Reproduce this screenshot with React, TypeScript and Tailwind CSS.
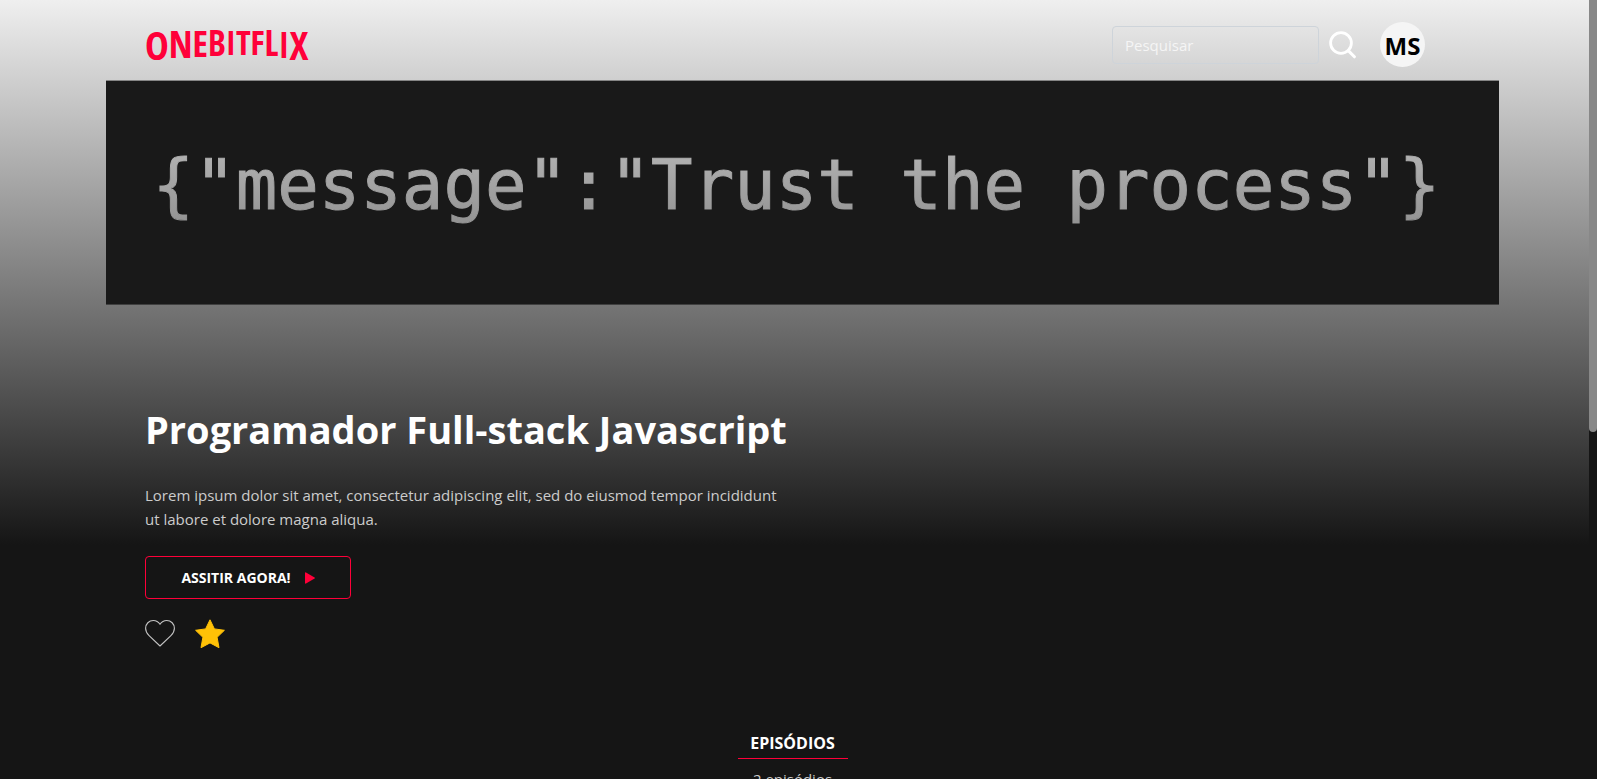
const logoLetters = [
  { char: "O", size: 40, dy: 36 },
  { char: "N", size: 38, dy: -2 },
  { char: "E", size: 36, dy: -1 },
  { char: "B", size: 35, dy: -1 },
  { char: "I", size: 34, dy: -1 },
  { char: "T", size: 34, dy: 0 },
  { char: "F", size: 34, dy: 0 },
  { char: "L", size: 35, dy: 1 },
  { char: "I", size: 36, dy: 2 },
  { char: "X", size: 40, dy: 2 },
];

function Logo() {
  return (
    <svg viewBox="0 0 164 40" className="h-10 w-[164px] overflow-visible" role="img" aria-label="ONEBITFLIX">
      <text x="0" y="0" fill="#ff0039" fontWeight="700" fontFamily="'Liberation Sans Narrow', 'Open Sans Condensed', 'DejaVu Sans Condensed', sans-serif">
        {logoLetters.map((letter, index) => (
          <tspan key={index} fontSize={letter.size} dy={letter.dy}>
            {letter.char}
          </tspan>
        ))}
      </text>
    </svg>
  );
}

function Header() {
  return (
    <header className="flex h-20 items-center justify-between pr-[164px] pl-[145px] pt-2">
      <a href="#">
        <Logo />
      </a>
      <div className="flex items-center">
        <form className="flex items-center gap-2.5 pt-0.5" onSubmit={(event) => event.preventDefault()}>
          <input
            type="search"
            aria-label="Pesquisar"
            placeholder="Pesquisar"
            className="h-[38px] w-[207px] rounded border border-[#ced4da] bg-transparent px-3 text-[15px] text-white placeholder:text-[#f5f5f5]"
          />
          <button type="submit" aria-label="Buscar">
            <svg viewBox="0 0 27 28" className="h-7 w-[27px]" fill="none" stroke="#fff" strokeLinecap="round">
              <circle cx="12" cy="12" r="10.4" strokeWidth="2.8" />
              <path d="M19.300 19.600 25.400 25.800" strokeWidth="3" />
            </svg>
          </button>
        </form>
        <button type="button" className="ml-6 flex size-[45px] items-center justify-center rounded-full bg-[#f5f5f5] pt-1 text-2xl font-bold text-black">
          MS
        </button>
      </div>
    </header>
  );
}

function Banner() {
  return (
    <div className="mr-[90px] ml-[106px] flex h-[225px] justify-center border-y border-t-[#858585] border-b-[#404040] bg-[#191919] pt-14 pr-3">
      <p className="h-24 bg-linear-to-b/srgb from-[#b8b8b8] to-[#8f8f8f] bg-clip-text font-['DejaVu_Sans_Mono',monospace] text-[69px] leading-[96px] whitespace-nowrap text-transparent [-webkit-text-stroke:1px_transparent]">
        {'{"message":"Trust the process"}'}
      </p>
    </div>
  );
}

function CourseInfo() {
  return (
    <section className="mt-24 flex flex-col items-start pl-[145px]">
      <h1 className="text-[38px] leading-[56px] font-bold text-white">Programador Full-stack Javascript</h1>
      <p className="mt-[26px] w-[660px] text-[15px] leading-6 text-[#ccc]">
        Lorem ipsum dolor sit amet, consectetur adipiscing elit, sed do eiusmod tempor incididunt
        <br />
        ut labore et dolore magna aliqua.
      </p>
      <button type="button" className="mt-[25px] flex h-[43px] w-[206px] items-center justify-center gap-3.5 rounded border border-[#ff0039] text-sm font-bold text-white">
        ASSITIR AGORA!
        <svg viewBox="0 0 10 12" className="h-3 w-2.5" fill="#ff0039">
          <path d="M0 1Q0 0 1 .4L9.6 5.4Q10.4 6 9.6 6.6L1 11.6Q0 12 0 11Z" />
        </svg>
      </button>
      <div className="mt-5 flex gap-5">
        <button type="button" aria-label="Favoritar">
          <svg viewBox="0 0 30 30" className="size-[30px]" fill="none" stroke="#c4c4c4" strokeWidth="1.1" strokeLinejoin="round">
            <path d="M15 5.3C13.3 2.7 10.9 1.500 8.300 1.500 4 1.500.6 4.900.6 9.300c0 3.200 1.300 5.300 3.500 7.400L15 27l10.900-10.300c2.200-2.100 3.500-4.200 3.500-7.400 0-4.400-3.400-7.800-7.700-7.800-2.600 0-5 1.200-6.700 3.800Z" />
          </svg>
        </button>
        <button type="button" aria-label="Curtir">
          <svg viewBox="0 0 30 30" className="size-[30px]" fill="#ffc107" stroke="#ffc107" strokeLinejoin="round">
            <path d="M15 .8 19.400 9.900 29.400 11.300 22.100 18.300 24 28.700 15 23.900 6 28.700 7.900 18.300.6 11.300 10.600 9.900Z" />
          </svg>
        </button>
      </div>
    </section>
  );
}

export default function App() {
  return (
    <div className="flex h-screen overflow-hidden bg-[#151515] font-['Open_Sans','Noto_Sans',sans-serif]">
      <main className="min-w-0 flex-1 bg-linear-to-b/srgb from-[#efefef] to-[#151515] to-[545px]">
        <Header />
        <Banner />
        <CourseInfo />
        <section className="mt-[82px] flex flex-col items-center pr-1">
          <h2 className="w-[110px] border-b border-[#ff0039] pb-[3px] text-center text-base leading-6 font-bold text-white">EPISÓDIOS</h2>
          <p className="mt-2 text-[15px] leading-6 text-[#ccc]">2 episódios</p>
        </section>
      </main>
      <div className="w-2 bg-[#151515]" aria-hidden="true">
        <div className="h-[55.5%] rounded-b bg-[#888]" />
      </div>
    </div>
  );
}
